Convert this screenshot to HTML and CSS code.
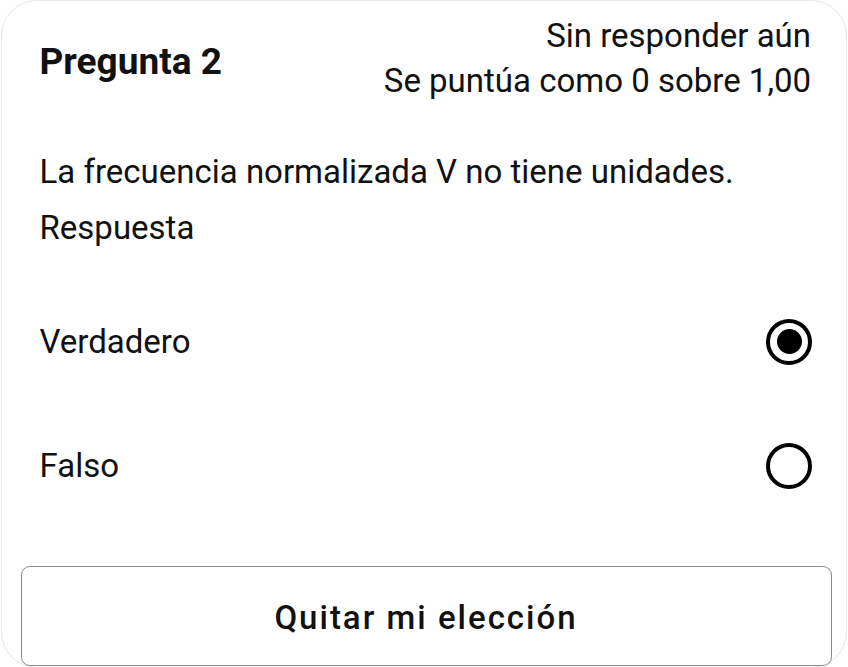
FILE: index.html
```html
<!DOCTYPE html>
<html lang="es">
<head>
<meta charset="utf-8">
<link rel="stylesheet" href="styles.css">
</head>
<body>
<div class="card">
  <div class="header">
    <h3 class="qno">Pregunta 2</h3>
    <div class="info">
      <div class="state">Sin responder aún</div>
      <div class="grade">Se puntúa como 0 sobre 1,00</div>
    </div>
  </div>
  <div class="qtext">La frecuencia normalizada V no tiene unidades.</div>
  <div class="prompt">Respuesta</div>
  <div class="answers">
    <label class="option">
      <span class="label">Verdadero</span>
      <span class="radio checked"></span>
    </label>
    <label class="option">
      <span class="label">Falso</span>
      <span class="radio"></span>
    </label>
  </div>
  <button class="clear">Quitar mi elección</button>
</div>
</body>
</html>
```
FILE: styles.css
```css
* { box-sizing: border-box; }
html, body { margin: 0; padding: 0; background: #fff; }
body {
  font-family: Roboto, "Liberation Sans", sans-serif;
  color: #111;
  width: 848px;
  height: 667px;
  overflow: hidden;
}
.card {
  margin: 0 1px 0 1px;
  height: 668px;
  border: 1.5px solid #e6e6e6;
  border-radius: 36px;
  padding: 12px 35px 0 37.5px;
}
.header {
  display: flex;
  justify-content: space-between;
  align-items: center;
}
.qno {
  margin: 0;
  font-size: 37px;
  font-weight: 700;
  line-height: 40px;
  padding-top: 8px;
}
.info {
  text-align: right;
  font-size: 33px;
  line-height: 45px;
}
.qtext {
  margin-top: 40.5px;
  font-size: 33px;
  line-height: 56px;
}
.prompt {
  font-size: 33px;
  line-height: 56px;
}
.answers {
  margin-top: 58px;
  display: flex;
  flex-direction: column;
  gap: 68px;
}
.option {
  display: flex;
  justify-content: space-between;
  align-items: center;
  font-size: 33px;
  line-height: 56px;
  height: 56px;
}
.radio {
  width: 46px;
  height: 46px;
  border: 4px solid #000;
  border-radius: 50%;
  display: flex;
  align-items: center;
  justify-content: center;
  margin-right: -1px;
}
.radio.checked::after {
  content: "";
  width: 25px;
  height: 25px;
  border-radius: 50%;
  background: #000;
}
.clear {
  display: block;
  margin: 72px 0 0 -19px;
  width: 811px;
  height: 100px;
  border: 1.5px solid #8a8a8a;
  border-radius: 9px;
  background: #fff;
  font-family: Roboto, "Liberation Sans", sans-serif;
  font-size: 33px;
  font-weight: 500;
  letter-spacing: 2px;
  color: #111;
  padding: 4px 0 0;
}
```
